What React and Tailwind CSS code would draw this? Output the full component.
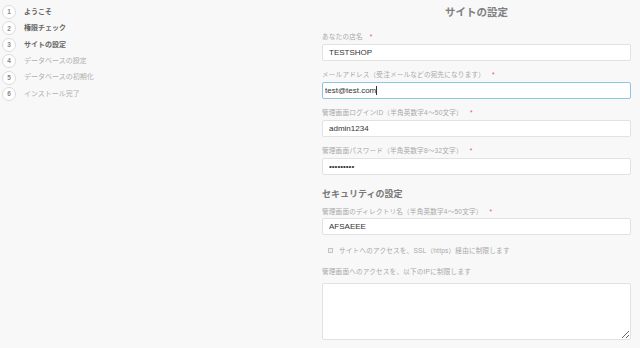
const steps = [
  { n: 1, label: 'ようこそ', done: true },
  { n: 2, label: '権限チェック', done: true },
  { n: 3, label: 'サイトの設定', done: true },
  { n: 4, label: 'データベースの設定', done: false },
  { n: 5, label: 'データベースの初期化', done: false },
  { n: 6, label: 'インストール完了', done: false },
]

const font = 'font-["Liberation_Sans","Noto_Sans_CJK_JP",sans-serif]'

function Label({ children, required }) {
  return (
    <div className="h-[12px] flex items-center text-[6.6px] tracking-[0.2px] text-[#a8a8a8] leading-none">
      {children}
      {required && <span className="ml-[7px] text-[#e05a5a]">*</span>}
    </div>
  )
}

function Field({ label, value, type = 'text' }) {
  return (
    <div className="h-[38px]">
      <Label required>{label}</Label>
      <input
        type={type}
        defaultValue={value}
        readOnly
        className="block mt-[1px] w-full h-[17px] px-[6px] bg-white border border-[#e2e2e2] rounded-[2px] text-[8px] text-[#333] outline-none"
      />
    </div>
  )
}

export default function App() {
  return (
    <div className={`w-[640px] h-[348px] bg-[#f8f8f8] grid grid-cols-[322px_1fr] ${font}`}>
      {/* 手順 */}
      <div className="pt-[5px] pl-[2px]">
        {steps.map((s) => (
          <div key={s.n} className="h-[16.4px] flex items-start gap-[8px]">
            <div className="w-[14px] h-[14px] rounded-full border border-[#dcdcdc] bg-white flex items-center justify-center text-[6.5px] font-bold text-[#888]">
              {s.n}
            </div>
            <div className={`h-[14px] flex items-center text-[7px] ${s.done ? 'font-bold text-[#666]' : 'text-[#b0b0b0]'}`}>
              {s.label}
            </div>
          </div>
        ))}
      </div>

      {/* フォーム */}
      <div className="pr-[9px]">
        <div className="h-[25px] flex items-center justify-center text-[10.5px] font-bold text-[#808080]">
          サイトの設定
        </div>
        <div className="pt-[6px]">
          <Field label="あなたの店名" value="TESTSHOP" />
          <div className="h-[38px]">
            <Label required>メールアドレス（受注メールなどの宛先になります）</Label>
            <div className="mt-[1px] w-full h-[17px] px-[2px] bg-white border border-[#8ec5e6] rounded-[2px] text-[8px] text-[#333] flex items-center">
              test@test.com<span className="w-[1px] h-[9px] bg-[#333]" />
            </div>
          </div>
          <Field label="管理画面ログインID（半角英数字4〜50文字）" value="admin1234" />
          <Field label="管理画面パスワード（半角英数字8〜32文字）" value="password1" type="password" />
        </div>

        <div className="h-[23px] flex items-center text-[9px] font-bold text-[#777]">
          セキュリティの設定
        </div>
        <div className="h-[38px]">
          <Label required>管理画面のディレクトリ名（半角英数字4〜50文字）</Label>
          <input
            defaultValue="AFSAEEE"
            readOnly
            className="block w-full h-[17px] px-[6px] bg-white border border-[#e2e2e2] rounded-[2px] text-[8px] text-[#333] outline-none"
          />
        </div>
        <div className="h-[13px] flex items-center pl-[6px] gap-[6px] text-[6.6px] tracking-[0.2px] text-[#a8a8a8]">
          <span className="w-[5px] h-[5px] border border-[#c4c4c4] bg-[#eee]" />
          サイトへのアクセスを、SSL（https）経由に制限します
        </div>
        <div className="h-[26px] flex items-end pb-[7px] text-[6.6px] tracking-[0.2px] text-[#a8a8a8] leading-none">
          管理画面へのアクセスを、以下のIPに制限します
        </div>
        <textarea
          readOnly
          className="block w-full h-[57px] bg-white border border-[#e2e2e2] rounded-[2px] outline-none"
        />
      </div>
    </div>
  )
}
